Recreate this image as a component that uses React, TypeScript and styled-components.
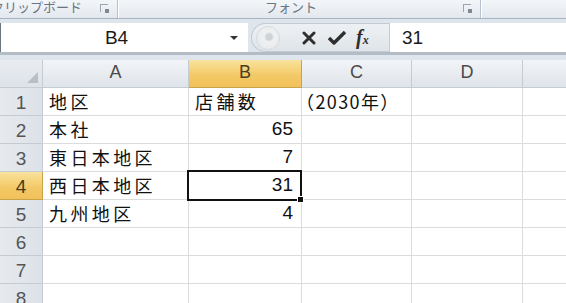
import React from 'react'
import styled, { createGlobalStyle, css } from 'styled-components'

const GlobalStyle = createGlobalStyle`
  html, body {
    margin: 0;
    padding: 0;
    background: #ffffff;
    overflow: hidden;
  }
  body {
    font-family: 'Liberation Sans', 'Noto Sans CJK JP', sans-serif;
  }
`

const columns = [
  { key: 'A', width: 146 },
  { key: 'B', width: 113 },
  { key: 'C', width: 110 },
  { key: 'D', width: 111 },
  { key: 'E', width: 60 },
]

interface CellData {
  text?: string
  numeric?: boolean
  tight?: boolean
}

const rows: CellData[][] = [
  [{ text: '地区' }, { text: '店舗数' }, { text: '（2030年）', tight: true }, {}, {}],
  [{ text: '本社' }, { text: '65', numeric: true }, {}, {}, {}],
  [{ text: '東日本地区' }, { text: '7', numeric: true }, {}, {}, {}],
  [{ text: '西日本地区' }, { text: '31', numeric: true }, {}, {}, {}],
  [{ text: '九州地区' }, { text: '4', numeric: true }, {}, {}, {}],
  [{}, {}, {}, {}, {}],
  [{}, {}, {}, {}, {}],
  [{}, {}, {}, {}, {}],
]

const selected = { row: 3, col: 1 }

const App: React.FC = () => {
  return (
    <>
      <GlobalStyle />
      <Window>
        <Ribbon>
          <RibbonGroup width={117}>
            <GroupLabel offset={-9}>クリップボード</GroupLabel>
            <Launcher />
          </RibbonGroup>
          <RibbonGroup width={362}>
            <GroupLabel offset={147}>フォント</GroupLabel>
            <Launcher />
          </RibbonGroup>
          <RibbonGroup width={120} />
        </Ribbon>

        <FormulaBar>
          <NameBox>
            <NameText>B4</NameText>
            <DropArrow />
          </NameBox>
          <FxButtons>
            <ExpandBall />
            <IconButton>
              <svg width="14" height="14" viewBox="0 0 14 14">
                <path d="M2 2 L12 12 M12 2 L2 12" stroke="#2f2f2f" strokeWidth="3" strokeLinecap="round" />
              </svg>
            </IconButton>
            <IconButton>
              <svg width="20" height="16" viewBox="0 0 20 16">
                <path d="M2 8 L7 13 L18 2" stroke="#2f2f2f" strokeWidth="3.4" fill="none" strokeLinejoin="round" />
              </svg>
            </IconButton>
            <FxLabel>
              <i>f</i>
              <sub>x</sub>
            </FxLabel>
          </FxButtons>
          <FormulaInput>31</FormulaInput>
        </FormulaBar>

        <Sheet>
          <Corner />
          {columns.map((c, ci) => (
            <ColHeader key={c.key} active={ci === selected.col}>
              {c.key === 'E' ? '' : c.key}
            </ColHeader>
          ))}
          {rows.map((r, ri) => (
            <React.Fragment key={ri}>
              <RowHeader active={ri === selected.row}>{ri + 1}</RowHeader>
              {r.map((cell, ci) => (
                <Cell
                  key={ci}
                  numeric={!!cell.numeric}
                  tight={!!cell.tight}
                  isSelected={ri === selected.row && ci === selected.col}
                >
                  {cell.text}
                </Cell>
              ))}
            </React.Fragment>
          ))}
        </Sheet>
      </Window>
    </>
  )
}
export default App

const Window = styled.div`
  width: 566px;
  height: 303px;
  overflow: hidden;
  display: flex;
  flex-direction: column;
  background: #dfe5ec;
`

const Ribbon = styled.div`
  display: flex;
  height: 18px;
  flex: 0 0 18px;
  background: linear-gradient(#f3f6f9, #e3e8ee);
  border-bottom: 1px solid #a9b4c0;
  overflow: hidden;
`

const RibbonGroup = styled.div<{ width: number }>`
  position: relative;
  display: flex;
  align-items: flex-start;
  width: ${({ width }) => width}px;
  flex: 0 0 auto;
  border-right: 1px solid #b8c2cd;
  box-shadow: 1px 0 0 #ffffff;
`

const GroupLabel = styled.span<{ offset: number }>`
  margin-left: ${({ offset }) => offset}px;
  margin-top: -2px;
  font-family: 'Noto Sans CJK JP', sans-serif;
  font-size: 13px;
  line-height: 18px;
  color: #6a7581;
  white-space: nowrap;
`

const Launcher = styled.span`
  position: absolute;
  right: 9px;
  top: 4px;
  width: 7px;
  height: 7px;
  border-left: 1px solid #9aa6b2;
  border-top: 1px solid #9aa6b2;

  &::after {
    content: '';
    position: absolute;
    right: -1px;
    bottom: -1px;
    width: 4px;
    height: 4px;
    background: #7d8894;
  }
`

const FormulaBar = styled.div`
  display: flex;
  align-items: stretch;
  height: 29px;
  margin-top: 4px;
  border-bottom: 3px solid #b3bbc5;
  background: #dfe5ec;
`

const NameBox = styled.div`
  display: flex;
  align-items: center;
  width: 247px;
  flex: 0 0 auto;
  background: #ffffff;
  border-left: 1px solid #6b7682;
`

const NameText = styled.span`
  flex: 1;
  text-align: center;
  font-size: 19px;
  color: #1a1a1a;
  padding-left: 2px;
`

const DropArrow = styled.span`
  width: 0;
  height: 0;
  margin-right: 10px;
  border-left: 4px solid transparent;
  border-right: 4px solid transparent;
  border-top: 4px solid #333;
`

const FxButtons = styled.div`
  display: flex;
  align-items: center;
  gap: 2px;
  width: 137px;
  flex: 0 0 auto;
  margin-left: 3px;
  background: linear-gradient(#eef1f4, #dfe4e9);
  border: 1px solid #c3cbd4;
  border-right: none;
  border-radius: 15px 0 0 15px;
`

const ExpandBall = styled.span`
  width: 22px;
  height: 22px;
  margin: 0 14px 0 4px;
  border-radius: 50%;
  background: radial-gradient(circle at 55% 45%, #cfd3d8 0 3px, #eef0f2 5px, #e6e9ec 100%);
  border: 1px solid #d6dade;
`

const IconButton = styled.span`
  display: flex;
  align-items: center;
  justify-content: center;
  width: 26px;
  height: 22px;
`

const FxLabel = styled.span`
  margin-left: 4px;
  font-family: 'Liberation Serif', serif;
  font-weight: bold;
  font-size: 20px;
  color: #2f2f2f;

  sub {
    font-size: 12px;
    font-style: italic;
    vertical-align: 0;
  }
`

const FormulaInput = styled.div`
  flex: 1;
  display: flex;
  align-items: center;
  padding-left: 12px;
  background: #ffffff;
  border-left: 1px solid #c3cbd4;
  font-size: 19px;
  color: #1a1a1a;
`

const Sheet = styled.div`
  display: grid;
  grid-template-columns: 43px ${columns.map((c) => `${c.width}px`).join(' ')};
  grid-auto-rows: 28px;
  margin-top: 5px;
  background: #ffffff;
  flex: 1;
  overflow: hidden;
`

const headerBase = css`
  box-sizing: border-box;
  display: flex;
  align-items: center;
  justify-content: center;
  font-family: 'Liberation Sans', sans-serif;
  font-size: 18px;
  color: #4b4b4b;
  border-right: 1px solid #c5cbd3;
  border-bottom: 1px solid #c5cbd3;
`

const Corner = styled.div`
  ${headerBase};
  position: relative;
  background: linear-gradient(#e9edf2, #dde2e8);

  &::after {
    content: '';
    position: absolute;
    right: 4px;
    bottom: 4px;
    border-left: 11px solid transparent;
    border-bottom: 11px solid #b9bec5;
  }
`

const activeHeader = css`
  background: linear-gradient(#f9e39d, #f3c865 60%, #f1c15b);
  border-color: #c9a447;
  color: #4a3d20;
`

const ColHeader = styled.div<{ active: boolean }>`
  ${headerBase};
  background: linear-gradient(#f2f4f7, #dfe4ea);
  padding-bottom: 2px;
  ${({ active }) => active && activeHeader}
`

const RowHeader = styled.div<{ active: boolean }>`
  ${headerBase};
  background: linear-gradient(90deg, #e6eaef, #dde2e8);
  font-size: 19px;
  color: #555;
  padding-top: 2px;
  ${({ active }) => active && activeHeader}
`

const Cell = styled.div<{ numeric: boolean; tight: boolean; isSelected: boolean }>`
  box-sizing: border-box;
  position: relative;
  display: flex;
  align-items: flex-end;
  justify-content: ${({ numeric }) => (numeric ? 'flex-end' : 'flex-start')};
  padding: 0 ${({ numeric }) => (numeric ? '8px' : '0')} 3px ${({ numeric, tight }) => (numeric || tight ? '0' : '6px')};
  text-indent: ${({ tight }) => (tight ? '-6px' : '0')};
  border-right: 1px solid #dadcdd;
  border-bottom: 1px solid #dadcdd;
  font-family: ${({ numeric }) =>
    numeric ? "'Liberation Sans', sans-serif" : "'Noto Sans CJK JP', sans-serif"};
  font-size: ${({ numeric }) => (numeric ? '19px' : '18px')};
  letter-spacing: ${({ numeric, tight }) => (numeric ? '0' : tight ? '1.4px' : '3.4px')};
  line-height: 22px;
  color: #111;
  white-space: nowrap;

  ${({ isSelected }) =>
    isSelected &&
    css`
      &::after {
        content: '';
        position: absolute;
        top: -2px;
        left: -2px;
        right: -1px;
        bottom: -2px;
        border: 2px solid #111;
        z-index: 2;
      }
      &::before {
        content: '';
        position: absolute;
        right: -3px;
        bottom: -4px;
        width: 5px;
        height: 5px;
        background: #111;
        border: 1px solid #fff;
        z-index: 3;
      }
    `}
`
